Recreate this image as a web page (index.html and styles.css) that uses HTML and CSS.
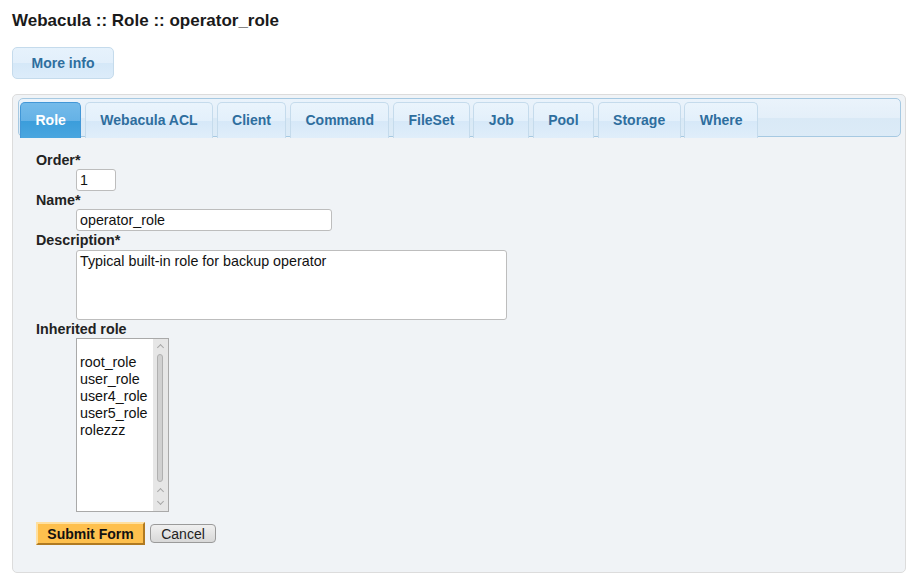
FILE: index.html
```html
<!DOCTYPE html>
<html>
<head>
<meta charset="utf-8">
<link rel="stylesheet" href="styles.css">
</head>
<body>
<h1 class="title">Webacula :: Role :: operator_role</h1>
<div class="more-wrap"><button class="more-btn">More info</button></div>
<div class="panel">
  <ul class="tabbar">
    <li class="tab active">Role</li>
    <li class="tab">Webacula ACL</li>
    <li class="tab">Client</li>
    <li class="tab">Command</li>
    <li class="tab">FileSet</li>
    <li class="tab">Job</li>
    <li class="tab">Pool</li>
    <li class="tab">Storage</li>
    <li class="tab">Where</li>
  </ul>
  <form class="form">
    <label class="lbl">Order*</label>
    <div class="field"><input class="inp inp-order" value="1"></div>
    <label class="lbl">Name*</label>
    <div class="field"><input class="inp inp-name" value="operator_role"></div>
    <label class="lbl lbl-desc">Description*</label>
    <div class="field"><textarea class="inp ta">Typical built-in role for backup operator</textarea></div>
    <label class="lbl">Inherited role</label>
    <div class="field">
      <div class="listbox">
        <div class="opts">
          <div class="opt">root_role</div>
          <div class="opt">user_role</div>
          <div class="opt">user4_role</div>
          <div class="opt">user5_role</div>
          <div class="opt">rolezzz</div>
        </div>
        <div class="sbar">
          <span class="arr up1"></span>
          <span class="thumb"></span>
          <span class="arr up2"></span>
          <span class="arr down"></span>
        </div>
      </div>
    </div>
    <div class="actions">
      <button type="button" class="submit">Submit Form</button>
      <button type="button" class="cancel">Cancel</button>
    </div>
  </form>
</div>
</body>
</html>
```
FILE: styles.css
```css
* { box-sizing: border-box; }
html, body { margin: 0; padding: 0; background: #fff; }
body {
  font-family: "Liberation Sans", Arial, sans-serif;
  color: #222;
  padding: 0 9px 0 12px;
}
.title {
  margin: 0;
  padding-top: 11px;
  font-size: 17px;
  line-height: 20px;
  font-weight: bold;
  color: #1a1a1a;
}
.more-wrap { margin-top: 16px; height: 32px; }
.more-btn {
  width: 102px;
  height: 32px;
  border: 1px solid #c5dbec;
  border-radius: 5px;
  background: linear-gradient(#e6f2fc 0%, #e2effb 50%, #d5e8f8 51%, #dcecfa 100%);
  color: #2e6e9e;
  font-family: "Liberation Sans", Arial, sans-serif;
  font-weight: bold;
  font-size: 14px;
  padding: 0;
  margin: 0;
}
.panel {
  margin-top: 15px;
  width: 894px;
  height: 479px;
  border: 1px solid #dcdcdc;
  border-radius: 5px;
  background: #f0f3f6;
  padding: 3px 4px 0 5px;
}
.tabbar {
  list-style: none;
  margin: 0;
  height: 39px;
  border: 1px solid #a6c9e2;
  border-radius: 5px;
  background: linear-gradient(#eaf3fb 0%, #e4eff9 50%, #d9e9f6 51%, #dcebf7 100%);
  padding: 3px 0 0 1px;
  display: flex;
  gap: 3.5px;
}
.tab {
  height: 36px;
  margin-bottom: -2px;
  border: 1px solid #c5dbec;
  border-bottom: none;
  border-radius: 5px 5px 0 0;
  background: linear-gradient(#eaf4fc 0%, #e3f0fb 50%, #d6e8f8 51%, #e0eefa 100%);
  color: #2e6e9e;
  font-weight: bold;
  font-size: 14px;
  line-height: 34px;
  padding: 0 14.5px;
  white-space: nowrap;
}
.tab.active {
  background: linear-gradient(#74bbea 0%, #65b2e6 50%, #3b9ddb 51%, #4aa6df 100%);
  border-color: #4297d7;
  color: #fff;
}
.form { padding: 14px 0 0 18px; }
.lbl {
  display: block;
  font-weight: bold;
  font-size: 14.3px;
  line-height: 18px;
  color: #222;
}
.lbl-desc { line-height: 19px; }
.field { padding-left: 40px; }
.inp {
  display: block;
  border: 1px solid #bdbdbd;
  border-radius: 3px;
  background: #fff;
  font-family: "Liberation Sans", Arial, sans-serif;
  font-size: 14.3px;
  color: #111;
  padding: 0 3px;
  margin: 0;
}
.inp-order { width: 40px; height: 22px; }
.inp-name { width: 256px; height: 22px; }
.ta { width: 431px; height: 70px; resize: none; padding: 2px 3px; line-height: 17px; }
.listbox {
  width: 93px;
  height: 174px;
  border: 1px solid #a9a9a9;
  background: #fff;
  display: flex;
}
.opts { flex: 1; padding: 15px 0 0 3px; }
.opt { font-size: 14.3px; line-height: 17px; color: #111; }
.sbar {
  width: 15px;
  background: #e6e6e6;
  position: relative;
}
.thumb {
  position: absolute;
  left: 4px; top: 15px;
  width: 6px; height: 128px;
  border: 1px solid #b0b0b0;
  border-radius: 3px;
  background: #d0d0d0;
}
.arr {
  position: absolute;
  left: 5px;
  width: 5px; height: 5px;
  border-left: 1.5px solid #a8a8a8;
  border-top: 1.5px solid #a8a8a8;
}
.up1 { top: 6px; transform: rotate(45deg); }
.up2 { top: 150px; transform: rotate(45deg); }
.down { top: 160px; transform: rotate(225deg); }
.actions { margin-top: 10px; display: flex; align-items: center; gap: 5px; }
.submit {
  width: 109px;
  height: 23px;
  margin: 0;
  padding: 0;
  background: #fec04e;
  border: 2px solid;
  border-color: #ffe0a0 #b07a22 #b07a22 #ffe0a0;
  font-family: "Liberation Sans", Arial, sans-serif;
  font-weight: bold;
  font-size: 14px;
  color: #111;
}
.cancel {
  width: 66px;
  height: 19px;
  margin: 0;
  padding: 0;
  border: 1px solid #9a9a9a;
  border-radius: 4px;
  background: linear-gradient(#f0f0f0, #d8d8d8);
  font-family: "Liberation Sans", Arial, sans-serif;
  font-size: 14px;
  color: #222;
}
```
